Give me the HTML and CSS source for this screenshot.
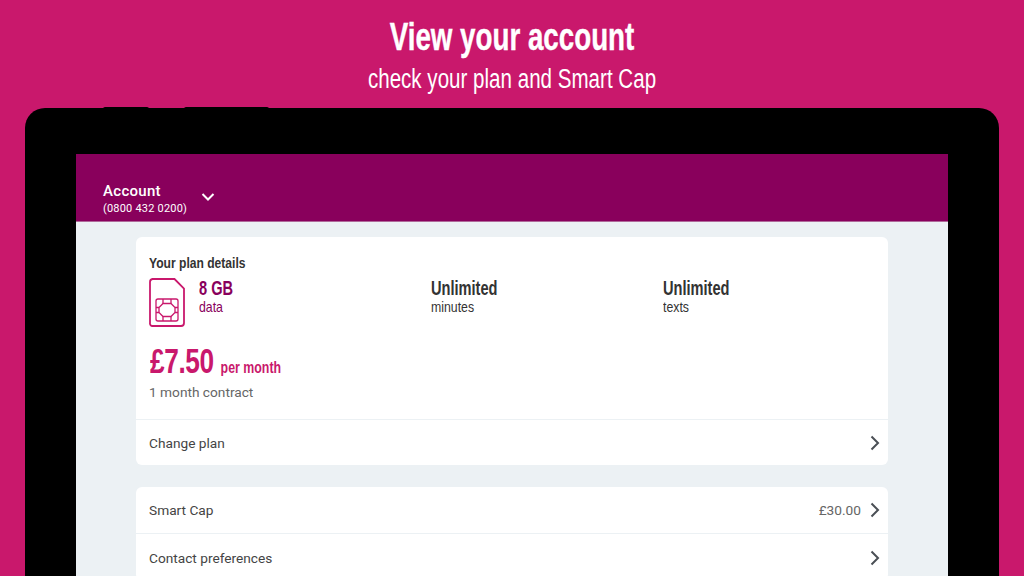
FILE: index.html
```html
<!DOCTYPE html>
<html lang="en">
<head>
<meta charset="utf-8">
<title>View your account</title>
<link rel="stylesheet" href="styles.css">
</head>
<body>
<div class="stage">
  <header class="promo">
    <h1 class="promo-title">View your account</h1>
    <p class="promo-sub">check your plan and Smart Cap</p>
  </header>
  <div class="tablet">
    <span class="hw-btn hw-a"></span>
    <span class="hw-btn hw-b"></span>
    <div class="screen">
      <div class="appbar">
        <div class="acct">
          <div class="acct-name">Account</div>
          <div class="acct-num">(0800 432 0200)</div>
        </div>
        <svg class="acct-chev" width="14" height="10" viewBox="0 0 14 10"><path d="M1.500 2 7 7.500 12.500 2" fill="none" stroke="#fff" stroke-width="2"/></svg>
      </div>
      <main class="content">
        <section class="card">
          <div class="plan">
            <h2 class="plan-title">Your plan details</h2>
            <div class="allow">
              <div class="allow-item allow-data">
                <svg class="sim" width="36" height="49" viewBox="0 0 36 49" fill="none" stroke="#c9186c">
                  <path stroke-width="1.800" d="M3.500 1h22l9.500 9.500V45a3 3 0 0 1-3 3H3.500a2.500 2.500 0 0 1-2.500-3V4a3 3 0 0 1 2.500-3z"/>
                  <g stroke-width="1.300">
                    <rect x="7" y="21" width="22" height="22" rx="2"/>
                    <path d="M14 25.500h8l4 4v5l-4 4h-8l-4-4v-5z"/>
                    <path d="M14 21v4.500M22 21v4.500M14 43v-4.500M22 43v-4.500M7 29.500h3M26 29.500h3M7 34.500h3M26 34.500h3"/>
                  </g>
                </svg>
                <div class="allow-text">
                  <div class="allow-big">8 GB</div>
                  <div class="allow-small">data</div>
                </div>
              </div>
              <div class="allow-item">
                <div class="allow-text">
                  <div class="allow-big">Unlimited</div>
                  <div class="allow-small">minutes</div>
                </div>
              </div>
              <div class="allow-item">
                <div class="allow-text">
                  <div class="allow-big">Unlimited</div>
                  <div class="allow-small">texts</div>
                </div>
              </div>
            </div>
            <div class="price"><span class="price-num">£7.50</span><span class="price-per">per month</span></div>
            <div class="term">1 month contract</div>
          </div>
          <div class="row">
            <span class="row-label">Change plan</span>
            <svg class="chev" width="10" height="16" viewBox="0 0 10 16"><path d="M1.500 1.500 8 8l-6.500 6.500" fill="none" stroke="#4a4f55" stroke-width="2"/></svg>
          </div>
        </section>
        <section class="card">
          <div class="row">
            <span class="row-label">Smart Cap</span>
            <span class="row-value">£30.00</span>
            <svg class="chev" width="10" height="16" viewBox="0 0 10 16"><path d="M1.500 1.500 8 8l-6.500 6.500" fill="none" stroke="#4a4f55" stroke-width="2"/></svg>
          </div>
          <div class="row">
            <span class="row-label">Contact preferences</span>
            <svg class="chev" width="10" height="16" viewBox="0 0 10 16"><path d="M1.500 1.500 8 8l-6.500 6.500" fill="none" stroke="#4a4f55" stroke-width="2"/></svg>
          </div>
        </section>
      </main>
    </div>
  </div>
</div>
</body>
</html>
```
FILE: styles.css
```css
* { box-sizing: border-box; }
html, body { margin: 0; padding: 0; }
body { width: 1024px; height: 576px; overflow: hidden; background: #c9186c; font-family: Roboto, sans-serif; }
h1, h2, p { margin: 0; font-weight: normal; }
.stage { height: 576px; display: flex; flex-direction: column; overflow: hidden; }
.promo { height: 108px; flex: none; color: #fff; text-align: center; font-family: "Liberation Sans", sans-serif; padding-top: 15px; }
.promo-title { font-size: 38px; line-height: 44px; font-weight: 700; transform: scaleX(.73); -webkit-text-stroke: .4px #fff; }
.promo-sub { font-size: 27px; line-height: 30px; margin-top: 5px; transform: scaleX(.762); }
.tablet { position: relative; flex: 1; margin: 0 25px; padding: 46px 51px 0; background: #000; border-radius: 20px 20px 0 0; }
.hw-btn { position: absolute; top: -1px; height: 2px; background: #000; border-radius: 2px 2px 0 0; }
.hw-a { left: 78px; width: 46px; }
.hw-b { left: 159px; width: 85px; }
.screen { height: 100%; background: #ecf1f4; overflow: hidden; }
.appbar { height: 68px; background: #89005c; border-bottom: 1px solid #b0699a; display: flex; align-items: flex-end; padding: 0 0 5px 27px; color: #fff; }
.acct-name { font-size: 15px; line-height: 20px; font-weight: 500; letter-spacing: .3px; }
.acct-num { font-size: 11px; line-height: 15px; letter-spacing: .2px; }
.acct-chev { margin: 0 0 14px 14px; }
.content { padding: 15px 60px 0; display: flex; flex-direction: column; gap: 22px; }
.card { background: #fff; border-radius: 6px; overflow: hidden; }
.plan { padding: 17px 13px 18px; height: 182px; }
.plan-title { font-family: "Liberation Sans", sans-serif; font-size: 15.500px; line-height: 18px; font-weight: 700; color: #333; transform: scaleX(.78); transform-origin: left; white-space: nowrap; }
.allow { display: grid; grid-template-columns: 282px 232px 1fr; margin-top: 6px; }
.allow-item { display: flex; }
.allow-data { gap: 14px; color: #89005c; }
.allow-item:not(.allow-data) { color: #333; }
.allow-big, .allow-small { font-family: "Liberation Sans", sans-serif; transform-origin: left; white-space: nowrap; }
.allow-big { font-size: 20px; line-height: 22px; font-weight: 700; margin-top: -1px; transform: scaleX(.73); }
.allow-small { font-size: 15px; line-height: 17px; margin-top: -1px; transform: scaleX(.82); }
.price { color: #c9186c; font-family: "Liberation Sans", sans-serif; font-weight: 700; margin-top: 14px; margin-left: 1px; display: flex; align-items: baseline; gap: 9px; transform: scaleX(.75); transform-origin: left; white-space: nowrap; }
.price-num { font-size: 35px; line-height: 40px; letter-spacing: -.5px; }
.price-per { font-size: 16.500px; }
.term { font-size: 13.700px; line-height: 18px; color: #666; margin-top: 2px; }
.row { height: 46px; border-top: 1px solid #ecf1f4; display: flex; align-items: center; padding: 0 8px 0 13px; color: #444; font-size: 13.700px; }
.card > .row:first-child { border-top: 0; height: 46px; }
.card > .row + .row { height: 47px; padding-top: 1px; }
.row-label { flex: 1; }
.row-value { color: #666; margin-right: 9px; }
.chev { flex: none; }
```
